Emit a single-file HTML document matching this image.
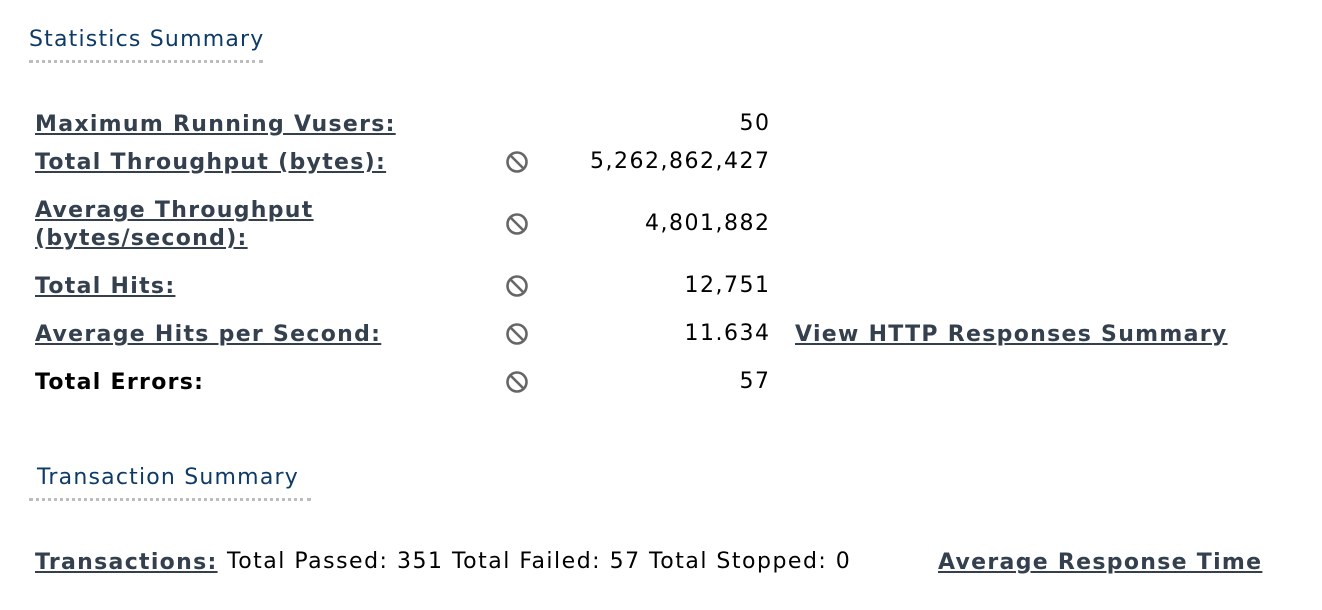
<!DOCTYPE html>
<html><head><style>
body{margin:0;width:1322px;height:610px;background:#fff;font-family:"DejaVu Sans","Liberation Sans",sans-serif;position:relative;overflow:hidden}
.t{position:absolute;color:#0d3a66;font-size:22px;white-space:nowrap;padding-bottom:8px;border-bottom:3px dotted #bdbdbd;letter-spacing:1.2px}
.l{position:absolute;left:35px;font-weight:bold;font-size:22px;color:#34404d;text-decoration:underline;white-space:nowrap;letter-spacing:1.3px;line-height:28px}
.v{position:absolute;right:553px;font-size:22px;color:#000;white-space:nowrap;letter-spacing:1.5px;margin-right:-1.5px}
.i{position:absolute;left:505px;width:24px;height:24px}
</style></head><body>
<div class="t" style="left:29px;top:27px;width:234px">Statistics Summary</div>
<div class="l" style="top:111px">Maximum Running Vusers:</div><div class="v" style="top:111px">50</div>
<div class="l" style="top:149px">Total Throughput (bytes):</div><div class="v" style="top:149px">5,262,862,427</div>
<div class="l" style="top:197px">Average Throughput<br>(bytes/second):</div><div class="v" style="top:211px">4,801,882</div>
<div class="l" style="top:273px">Total Hits:</div><div class="v" style="top:273px">12,751</div>
<div class="l" style="top:321px">Average Hits per Second:</div><div class="v" style="top:321px">11.634</div>
<div class="l" style="top:321px;left:795px">View HTTP Responses Summary</div>
<div class="l" style="top:369px;color:#000;text-decoration:none">Total Errors:</div><div class="v" style="top:369px">57</div>
<svg class="i" style="top:150px" viewBox="0 0 24 24"><circle cx="12" cy="12" r="9.5" fill="none" stroke="#666" stroke-width="2.6"/><line x1="5.5" y1="5.5" x2="18.5" y2="18.5" stroke="#666" stroke-width="2.6"/></svg>
<svg class="i" style="top:212px" viewBox="0 0 24 24"><circle cx="12" cy="12" r="9.5" fill="none" stroke="#666" stroke-width="2.6"/><line x1="5.5" y1="5.5" x2="18.5" y2="18.5" stroke="#666" stroke-width="2.6"/></svg>
<svg class="i" style="top:274px" viewBox="0 0 24 24"><circle cx="12" cy="12" r="9.5" fill="none" stroke="#666" stroke-width="2.6"/><line x1="5.5" y1="5.5" x2="18.5" y2="18.5" stroke="#666" stroke-width="2.6"/></svg>
<svg class="i" style="top:322px" viewBox="0 0 24 24"><circle cx="12" cy="12" r="9.5" fill="none" stroke="#666" stroke-width="2.6"/><line x1="5.5" y1="5.5" x2="18.5" y2="18.5" stroke="#666" stroke-width="2.6"/></svg>
<svg class="i" style="top:370px" viewBox="0 0 24 24"><circle cx="12" cy="12" r="9.5" fill="none" stroke="#666" stroke-width="2.6"/><line x1="5.5" y1="5.5" x2="18.5" y2="18.5" stroke="#666" stroke-width="2.6"/></svg>
<div class="t" style="left:29px;top:465px;padding-left:8px;width:274px">Transaction Summary</div>
<div class="l" style="top:549px">Transactions:</div>
<div style="position:absolute;left:227px;top:549px;font-size:22px;color:#000;white-space:nowrap;letter-spacing:1.5px">Total Passed: 351 Total Failed: 57 Total Stopped: 0</div>
<div class="l" style="top:549px;left:938px">Average Response Time</div>
</body></html>
